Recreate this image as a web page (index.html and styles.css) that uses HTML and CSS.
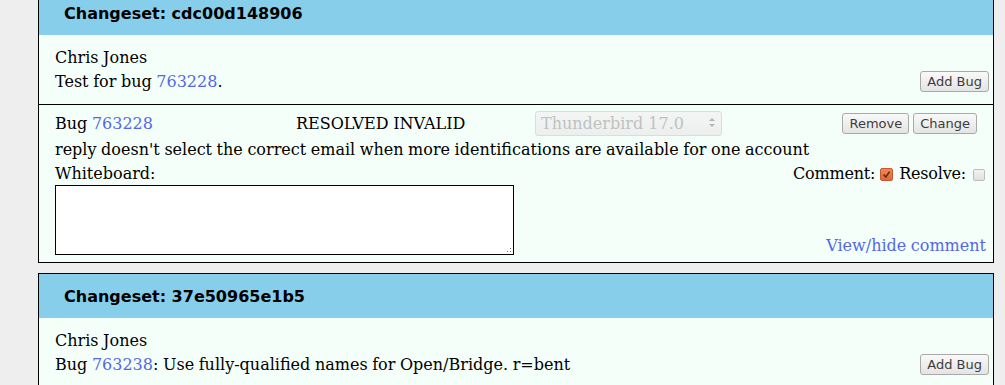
FILE: index.html
```html
<!DOCTYPE html>
<html>
<head>
<meta charset="utf-8">
<link rel="stylesheet" href="styles.css">
</head>
<body>
<div class="page">
  <div class="changeset">
    <div class="cs-head">Changeset: cdc00d148906</div>
    <div class="cs-body">
      <div class="cs-text">
        <div>Chris Jones</div>
        <div>Test for bug <a href="#">763228</a>.</div>
      </div>
      <button class="btn">Add Bug</button>
    </div>
    <div class="bug">
      <div class="bug-head">
        <div class="bug-id">Bug <a href="#">763228</a></div>
        <div class="bug-status">RESOLVED INVALID</div>
        <div class="select-wrap">
          <select class="sel" disabled><option>Thunderbird 17.0</option></select>
          <span class="sel-arrows"><span class="arr-up"></span><span class="arr-down"></span></span>
        </div>
        <div class="bug-actions">
          <button class="btn">Remove</button>
          <button class="btn">Change</button>
        </div>
      </div>
      <div class="bug-summary">reply doesn't select the correct email when more identifications are available for one account</div>
      <div class="bug-wb">
        <span>Whiteboard:</span>
        <span class="flags"><span class="lbl">Comment:</span><span class="cb cb-on"><svg width="9" height="9" viewBox="0 0 9 9"><path d="M1.5 4.5 L3.8 7 L7.6 1.6" fill="none" stroke="#5a2a12" stroke-width="1.5"/></svg></span><span class="lbl">Resolve:</span><span class="cb cb-off"></span></span>
      </div>
      <div class="bug-foot">
        <div class="wb-wrap"><textarea class="wb"></textarea></div>
        <a href="#" class="toggle">View/hide comment</a>
      </div>
    </div>
  </div>
  <div class="changeset">
    <div class="cs-head">Changeset: 37e50965e1b5</div>
    <div class="cs-body">
      <div class="cs-text">
        <div>Chris Jones</div>
        <div>Bug <a href="#">763238</a>: Use fully-qualified names for Open/Bridge. r=bent</div>
      </div>
      <button class="btn">Add Bug</button>
    </div>
  </div>
</div>
</body>
</html>
```

FILE: styles.css
```css
html, body {
  margin: 0;
  padding: 0;
  background: #eeeeee;
}
body {
  font-family: "DejaVu Serif", serif;
  font-size: 16px;
  color: #000;
  word-spacing: -0.5px;
}
a {
  color: #5468e4;
  text-decoration: none;
}
.page {
  margin-top: -10px;
  margin-left: 38px;
  width: 956px;
}
.changeset {
  border: 1px solid #000;
  background: #f5fffa;
  margin-bottom: 10px;
}
.cs-head {
  height: 44px;
  display: flex;
  align-items: center;
  padding-left: 25px;
  background: #87ceeb;
  font-family: "DejaVu Sans", sans-serif;
  font-weight: bold;
  font-size: 16px;
  word-spacing: 0;
}
.cs-body {
  display: flex;
  justify-content: space-between;
  align-items: flex-end;
  padding: 11px 4px 10px 16px;
  line-height: 24px;
}
.cs-body .btn {
  margin-bottom: 2px;
}
.btn {
  font-family: "DejaVu Sans", sans-serif;
  font-size: 13px;
  line-height: 15px;
  word-spacing: 0;
  color: #3c3c3c;
  padding: 2px 6px;
  margin: 0;
  border: 1px solid #a9a9a9;
  border-radius: 3px;
  background: linear-gradient(#f9f9f9, #e4e4e4);
}
.bug {
  border-top: 1px solid #000;
  padding: 6px 0 7px 16px;
  line-height: 23px;
}
.bug-head {
  display: flex;
  align-items: center;
  height: 25px;
  margin-bottom: 2px;
}
.bug-summary {
  line-height: 24px;
}
.bug-id {
  width: 241px;
}
.bug-status {
  width: 239px;
}
.select-wrap {
  position: relative;
  width: 187px;
  height: 25px;
}
.sel {
  appearance: none;
  -webkit-appearance: none;
  width: 187px;
  height: 25px;
  box-sizing: border-box;
  font-family: "DejaVu Serif", serif;
  font-size: 16px;
  color: #a8a8a8;
  padding: 0 0 0 5px;
  margin: 0;
  border: 1px solid #cfcfcf;
  border-radius: 3px;
  background: linear-gradient(#f2f2f2, #e9e9e9);
}
.sel-arrows {
  position: absolute;
  right: 7px;
  top: 7px;
  display: flex;
  flex-direction: column;
  gap: 3px;
}
.arr-up, .arr-down {
  width: 0;
  height: 0;
  border-left: 3px solid transparent;
  border-right: 3px solid transparent;
}
.arr-up {
  border-bottom: 3px solid #b4b4b4;
}
.arr-down {
  border-top: 3px solid #b4b4b4;
}
.bug-actions {
  margin-left: auto;
  margin-right: 16px;
  display: flex;
  gap: 4px;
}
.bug-wb {
  display: flex;
  justify-content: space-between;
}
.flags {
  margin-right: 8px;
  display: flex;
  align-items: center;
}
.lbl {
  letter-spacing: -0.2px;
}
.cb {
  display: inline-flex;
  align-items: center;
  justify-content: center;
  width: 11px;
  height: 11px;
  border-radius: 2px;
  margin: 2px 6px 0 5px;
}
.cb-on {
  background: linear-gradient(#f4865a, #e06838);
  border: 1px solid #c45a2e;
}
.cb-off {
  width: 10px;
  height: 10px;
  background: linear-gradient(#f2f2f2, #e0e0e0);
  border: 1px solid #bdbdbd;
  margin: 2px 0 0 7px;
}
.bug-foot {
  display: flex;
  justify-content: space-between;
  align-items: flex-end;
}
.wb-wrap {
  position: relative;
}
.wb-wrap::after {
  content: "";
  position: absolute;
  right: 3px;
  bottom: 3px;
  width: 4px;
  height: 4px;
  background:
    linear-gradient(#666, #666) 3px 0 / 1px 1px no-repeat,
    linear-gradient(#666, #666) 3px 3px / 1px 1px no-repeat,
    linear-gradient(#666, #666) 0 3px / 1px 1px no-repeat;
}
.wb {
  display: block;
  box-sizing: border-box;
  width: 459px;
  height: 70px;
  margin: 0;
  border: 1px solid #000;
  background: #fff;
  resize: none;
}
.toggle {
  line-height: 19px;
  margin-right: 7px;
}
```
